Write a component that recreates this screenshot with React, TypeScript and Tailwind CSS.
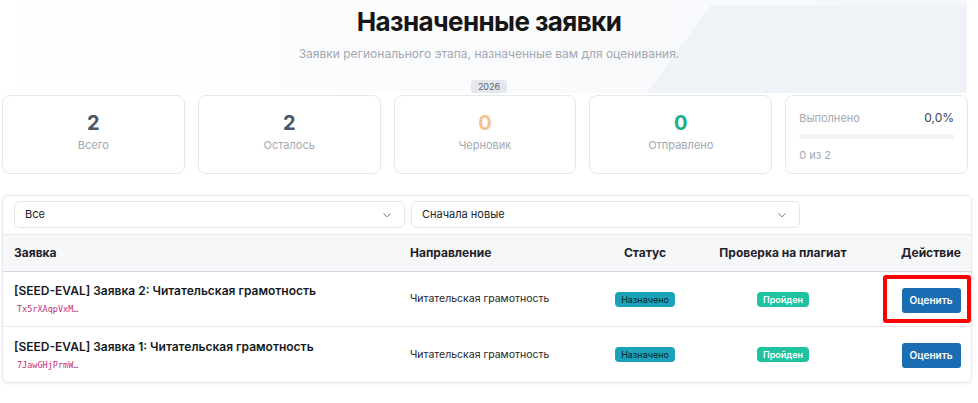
import React from "react";

const font = { fontFamily: "Inter, 'Noto Sans', sans-serif" };

function Chevron() {
  return (
    <svg width="10" height="10" viewBox="0 0 16 16" fill="none" stroke="#6b7280" strokeWidth="1.6" strokeLinecap="round" strokeLinejoin="round">
      <path d="M3 6l5 5 5-5" />
    </svg>
  );
}

function Stat({ value, label, color }: { value: string; label: string; color: string }) {
  return (
    <div className="h-[79px] rounded-lg border border-[#e6e8ec] bg-white flex flex-col items-center pt-[15px]">
      <div className={`text-[20px] leading-[24px] font-bold ${color}`}>{value}</div>
      <div className="text-[11px] leading-[16px] mt-[2px] text-[#a3a8b0]">{label}</div>
    </div>
  );
}

const rows = [
  { title: "[SEED-EVAL] Заявка 2: Читательская грамотность", id: "Tx5rXAqpVxM…", hl: true },
  { title: "[SEED-EVAL] Заявка 1: Читательская грамотность", id: "7JawGHjPrmW…", hl: false },
];

export default function App() {
  return (
    <div className="w-[978px] h-[403px] bg-white overflow-hidden text-[#212529]" style={font}>
      <div className="relative">
        <div className="absolute left-0 top-0 right-[11px] h-[93px] bg-gradient-to-r from-[#ffffff] to-[#f5f7fa]" />
        <div className="absolute top-[5px] right-[11px] w-[320px] h-[88px] bg-[#eff2f7] [clip-path:polygon(20%_0,100%_0,100%_100%,0_100%)]" />
        <div className="relative flex flex-col items-center pt-[4px]">
          <h1 className="text-[26px] leading-[36px] font-bold tracking-[-0.6px] text-[#161616]">Назначенные заявки</h1>
          <p className="mt-[5px] text-[12px] leading-[18px] text-[#a2a8b1]">Заявки регионального этапа, назначенные вам для оценивания.</p>
          <span className="mt-[17px] h-[13px] px-[7px] rounded bg-[#e4e8ee] text-[9px] leading-[13px] text-[#5b6470]">2026</span>
        </div>
      </div>

      <div className="pl-[2px] pr-[10px] mt-[2px] grid grid-cols-5 gap-[13px]">
        <Stat value="2" label="Всего" color="text-[#4a5565]" />
        <Stat value="2" label="Осталось" color="text-[#4a5565]" />
        <Stat value="0" label="Черновик" color="text-[#f3c48e]" />
        <Stat value="0" label="Отправлено" color="text-[#21ad87]" />
        <div className="h-[79px] rounded-lg border border-[#e6e8ec] bg-white px-[13px] pt-[14px]">
          <div className="flex items-center justify-between">
            <span className="text-[11px] leading-[16px] text-[#a3a8b0]">Выполнено</span>
            <span className="text-[12px] leading-[16px] text-[#374151]">0,0%</span>
          </div>
          <div className="mt-[8px] h-[5px] rounded-full bg-[#f1f3f6]" />
          <div className="mt-[8px] text-[11px] leading-[16px] text-[#a3a8b0]">0 из 2</div>
        </div>
      </div>

      <div className="ml-[2px] mr-[6px] mt-[21px] rounded-md border border-[#e6e8ec] bg-white shadow-[0_1px_3px_rgba(0,0,0,0.06)]">
        <div className="flex gap-[6px] px-[11px] pt-[5px] pb-[6px]">
          <div className="w-[391px] h-[27px] rounded-md border border-[#e3e6ea] flex items-center justify-between pl-[10px] pr-[12px] text-[11px] text-[#212529]">
            <span>Все</span>
            <Chevron />
          </div>
          <div className="w-[389px] h-[27px] rounded-md border border-[#e3e6ea] flex items-center justify-between pl-[10px] pr-[12px] text-[11px] text-[#212529]">
            <span>Сначала новые</span>
            <Chevron />
          </div>
        </div>

        <div className="grid grid-cols-[396px_192px_108px_168px_1fr] h-[38px] items-center bg-[#f6f7f9] border-t border-[#e6e8ec] border-b border-b-[#d5d9de] text-[12px] font-bold text-[#1f2328]">
          <div className="pl-[11px]">Заявка</div>
          <div className="pl-[11px]">Направление</div>
          <div className="text-center">Статус</div>
          <div className="text-center">Проверка на плагиат</div>
          <div className="text-center pl-[24px]">Действие</div>
        </div>

        {rows.map((r, i) => (
          <div
            key={i}
            className={`grid grid-cols-[396px_192px_108px_168px_1fr] h-[55px] items-center ${i === 0 ? "border-b border-[#e9ecef]" : ""}`}
          >
            <div className="pl-[11px]">
              <div className="text-[12px] leading-[18px] font-semibold text-[#161a1e]">{r.title}</div>
              <div className="mt-[2px] pl-[3px] text-[8.5px] leading-[14px] text-[#c2307a]" style={{ fontFamily: "'DejaVu Sans Mono', monospace" }}>{r.id}</div>
            </div>
            <div className="pl-[11px] text-[10.5px] text-[#212529]">Читательская грамотность</div>
            <div className="flex justify-center">
              <span className="h-[15px] px-[6px] rounded-[4px] bg-[#1aa2b8] text-[9px] leading-[15px] text-[#0b2227]">Назначено</span>
            </div>
            <div className="flex justify-center">
              <span className="h-[15px] px-[6px] rounded-[4px] bg-[#20c3a0] text-[9px] leading-[15px] font-semibold text-white">Пройден</span>
            </div>
            <div className="flex justify-center pl-[24px]">
              <div className="relative">
                <button className="h-[25px] w-[59px] rounded-[3px] bg-[#1b6db3] text-[10px] font-semibold text-white">Оценить</button>
                {r.hl && (
                  <div className="absolute -left-[19px] -right-[10px] -top-[11px] -bottom-[10px] border-[4px] border-[#ff0000] rounded-[3px] pointer-events-none" />
                )}
              </div>
            </div>
          </div>
        ))}
      </div>
    </div>
  );
}
